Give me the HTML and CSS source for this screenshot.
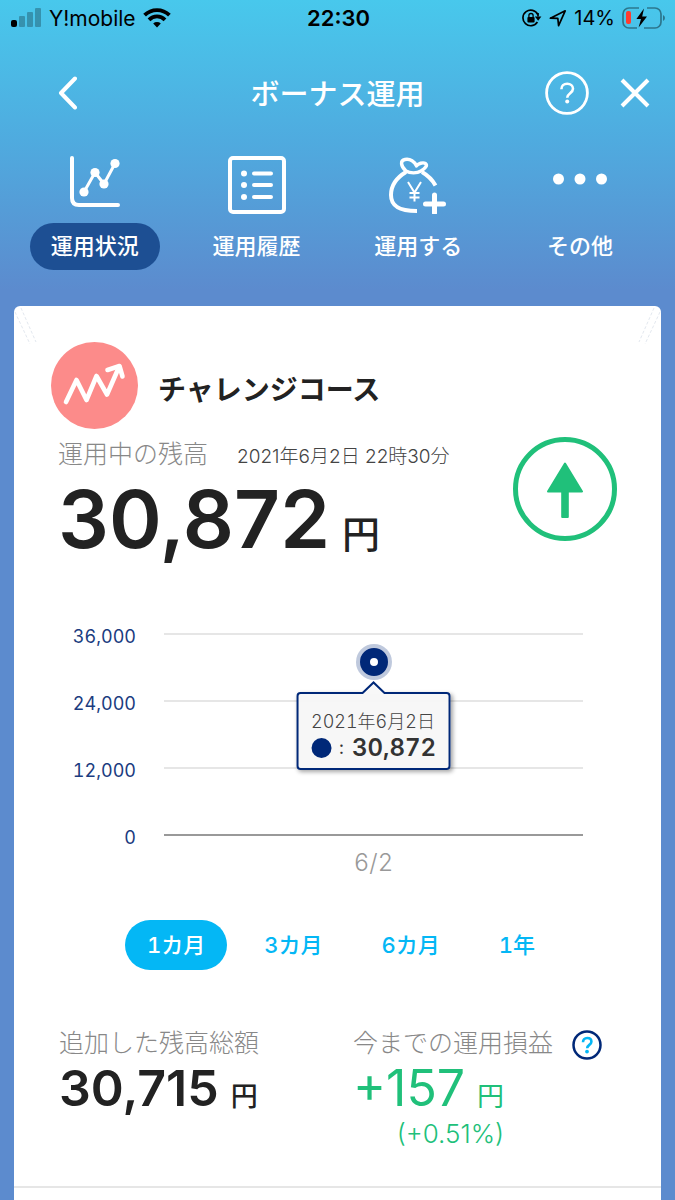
FILE: index.html
```html
<!DOCTYPE html>
<html lang="ja">
<head>
  <meta charset="UTF-8" />
  <meta name="viewport" content="width=device-width, initial-scale=1.0"/>
  <title>ボーナス運用</title>
  <link rel="stylesheet" href="styles.css">
</head>
<body>
  <div class="status-bar">
    <div class="status-left">
      <svg width="31" height="20" viewBox="0 0 31 20">
        <rect x="0" y="12" width="6" height="7" rx="2"/>
        <g opacity="0.25">
          <rect x="8" y="8" width="6" height="11" rx="1"/>
          <rect x="16" y="4" width="6" height="15" rx="1"/>
          <rect x="24" y="0" width="6" height="19" rx="1"/>
        </g>
      </svg>
      <span class="carrier">Y!mobile</span>
      <svg width="28" height="20" viewBox="0 0 28 20" fill="none" stroke="#000" stroke-width="3.8">
        <path d="M1.600 7.200a17.500 17.500 0 0 1 24.800 0"/>
        <path d="M6 11.800a11.200 11.200 0 0 1 16 0"/>
        <path d="M10.200 15.400a5.600 5.600 0 0 1 7.600 0L14 19.400Z" fill="#000" stroke="none"/>
      </svg>
    </div>
    <div class="status-time">22:30</div>
    <div class="status-right">
      <svg width="20" height="18" viewBox="0 0 20 18">
        <path d="M15.800 5.600A7.800 7.800 0 1 0 15.400 13" fill="none" stroke="#000" stroke-width="1.700"/>
        <path d="M16 4v3.600" stroke="#000" stroke-width="1.700"/>
        <path d="M12.800 7.400h6.600l-3.200 4.400z"/>
        <rect x="5.400" y="8" width="7.200" height="5.400" rx="1"/>
        <path d="M6.900 8.200V6.600a2.100 2.100 0 0 1 4.200 0v1.600" fill="none" stroke="#000" stroke-width="1.300"/>
      </svg>
      <svg width="18" height="18" viewBox="0 0 18 18" fill="none" stroke="#000" stroke-width="1.700" stroke-linejoin="round">
        <path d="M1.400 9.200 16.200 1.800 9.600 16.600 8.800 9.400Z"/>
      </svg>
      <span>14%</span>
      <svg width="44" height="22" viewBox="0 0 44 22">
        <path d="M17 1H7a6 6 0 0 0-6 6v8a6 6 0 0 0 6 6h8M25 1h8a6 6 0 0 1 6 6v8a6 6 0 0 1-6 6H22" fill="none" stroke="#000" stroke-opacity="0.4" stroke-width="1.700"/>
        <path d="M41 8v6q2-1 2-3t-2-3z" opacity="0.4"/>
        <rect x="4" y="4" width="5" height="13" rx="2" fill="#ff3b30"/>
        <path d="M22 1.500 14.400 12H19l-2.400 8.500L25 9.600h-4.800z"/>
      </svg>
    </div>
  </div>

  <header class="title-bar">
    <button class="icon-btn back" aria-label="戻る">
      <svg width="20" height="34" viewBox="0 0 20 34" fill="none" stroke="#fff" stroke-width="4" stroke-linecap="round" stroke-linejoin="round">
        <path d="M18 2.500 4 17 18 31.500"/>
      </svg>
    </button>
    <h1>ボーナス運用</h1>
    <div class="title-actions">
      <button class="icon-btn" aria-label="ヘルプ">
        <svg width="44" height="44" viewBox="0 0 44 44" fill="none" stroke="#fff" stroke-width="2.800">
          <circle cx="22" cy="22" r="20.400"/>
          <path d="M16.400 18.200c0-3.400 2.400-5.400 5.800-5.400s5.800 2 5.800 5c0 4.400-5.800 4.400-5.800 9" stroke-width="2.600"/>
          <circle cx="22.200" cy="30.600" r="2" fill="#fff" stroke="none"/>
        </svg>
      </button>
      <button class="icon-btn" aria-label="閉じる">
        <svg width="30" height="30" viewBox="0 0 30 30" fill="none" stroke="#fff" stroke-width="4">
          <path d="M2 2 28 28M28 2 2 28"/>
        </svg>
      </button>
    </div>
  </header>

  <nav class="tabs">
    <a href="#status" class="tab active">
      <svg width="60" height="60" viewBox="0 0 60 60" fill="none" stroke="#fff" stroke-width="4" stroke-linecap="round">
        <path d="M7 4v40q0 7 7 7h39"/>
        <path d="M19 38 30 18.500l9 11.500L50 9.500" stroke-width="3"/>
        <g fill="#fff" stroke="none">
          <circle cx="19" cy="38" r="4.600"/>
          <circle cx="30" cy="18.500" r="4.600"/>
          <circle cx="39" cy="30" r="4.600"/>
          <circle cx="50" cy="9.500" r="4.600"/>
        </g>
      </svg>
      <span>運用状況</span>
    </a>
    <a href="#history" class="tab">
      <svg width="60" height="60" viewBox="0 0 60 60" fill="none" stroke="#fff" stroke-width="4" stroke-linecap="round">
        <rect x="3" y="4" width="54" height="54" rx="3"/>
        <path d="M27 19.500h17M27 31h17M27 43h17"/>
        <g fill="#fff" stroke="none">
          <circle cx="17" cy="19.500" r="3"/>
          <circle cx="17" cy="31" r="3"/>
          <circle cx="17" cy="43" r="3"/>
        </g>
      </svg>
      <span>運用履歴</span>
    </a>
    <a href="#invest" class="tab">
      <svg width="60" height="60" viewBox="0 0 60 60" fill="none" stroke="#fff" stroke-width="4">
        <path d="M18 18C8 24 3 32.500 3 41c0 10.500 7 16 26 16M34 18c6 3.500 10.500 8 13.500 13.500"/>
        <path d="M18 17C12.500 12 12 6.500 17 5.500c5-1 10 2 11.500 6.500C30 9.500 35 8 37.500 9.500c2.500 2-.500 5-4.500 7.500-4 2.500-11 2.500-15 0Z" stroke-width="3.400" stroke-linejoin="round"/>
        <path d="M20 28l6.500 10.500L33 28M26.500 38.500v9M21.500 39h10M21.500 43.500h10" stroke-width="2"/>
        <path d="M46.500 41v18M37.500 50h18" stroke-width="5" stroke-linecap="round"/>
      </svg>
      <span>運用する</span>
    </a>
    <a href="#other" class="tab">
      <svg width="60" height="60" viewBox="0 0 60 60" fill="#fff">
        <circle cx="8.500" cy="25" r="5.500"/>
        <circle cx="30" cy="25" r="5.500"/>
        <circle cx="51.500" cy="25" r="5.500"/>
      </svg>
      <span>その他</span>
    </a>
  </nav>

  <main class="card">
    <svg class="corner left" width="24" height="40" viewBox="0 0 24 40"><path d="M1 6 16 38M7 2 22 36"/></svg>
    <svg class="corner right" width="24" height="40" viewBox="0 0 24 40"><path d="M23 6 8 38M17 2 2 36"/></svg>

    <div class="course">
      <svg width="87" height="87" viewBox="0 0 87 87" fill="none" stroke="#fff" stroke-width="4.600" stroke-linecap="round" stroke-linejoin="round">
        <circle cx="43.500" cy="43.500" r="43.500" fill="#fc8b8a" stroke="none"/>
        <path d="M15 60 25.500 38 35.500 58 45.500 34 56 52.500 68 25"/>
        <path d="M56.500 28 68.500 24 71.500 34.500"/>
      </svg>
      <h2>チャレンジコース</h2>
    </div>

    <section class="balance">
      <div>
        <div class="balance-head">
          <span class="label">運用中の残高</span>
          <time class="date">2021年6月2日 22時30分</time>
        </div>
        <div class="balance-amount">30,872<span class="yen">円</span></div>
      </div>
      <svg width="104" height="104" viewBox="0 0 104 104">
        <circle cx="52" cy="52" r="49.500" fill="none" stroke="#20c07a" stroke-width="5"/>
        <path d="M52 26.500 69 54.500H54.800V80h-5.600V54.500H35Z" fill="#20c07a" stroke="#20c07a" stroke-width="2" stroke-linejoin="round"/>
      </svg>
    </section>

    <section class="chart">
      <div class="y-axis">
        <span>36,000</span>
        <span>24,000</span>
        <span>12,000</span>
        <span>0</span>
      </div>
      <div class="plot">
        <div class="band"></div>
        <div class="band"></div>
        <div class="band"></div>
        <div class="point" style="left: 50%; bottom: 85.8%"></div>
        <div class="tooltip">
          <svg class="caret" width="26" height="13" viewBox="0 0 26 13">
            <path d="M1 13 13 1.500 25 13" fill="#f8f8f8" stroke="#002878" stroke-width="2"/>
          </svg>
          <div class="tooltip-date">2021年6月2日</div>
          <div class="tooltip-value"><i class="dot"></i><span>:</span><b>30,872</b></div>
        </div>
      </div>
      <div class="x-axis">6/2</div>
    </section>

    <div class="periods">
      <button class="period selected">1カ月</button>
      <button class="period">3カ月</button>
      <button class="period">6カ月</button>
      <button class="period">1年</button>
    </div>

    <section class="totals">
      <div class="total">
        <div class="label">追加した残高総額</div>
        <div class="amount">30,715<span class="yen">円</span></div>
      </div>
      <div class="total">
        <div class="label-row">
          <span class="label">今までの運用損益</span>
          <button class="icon-btn" aria-label="運用損益について">
            <svg width="30" height="30" viewBox="0 0 30 30" fill="none">
              <circle cx="15" cy="15" r="13.500" stroke="#002878" stroke-width="2.500"/>
              <path d="M11 12.200c0-2.600 1.600-4.200 4.200-4.200s4.200 1.500 4.200 3.700c0 3.300-4.200 3.100-4.200 6.500" stroke="#04b7f5" stroke-width="2.600"/>
              <circle cx="15" cy="21.600" r="1.900" fill="#04b7f5"/>
            </svg>
          </button>
        </div>
        <div class="gain">
          <div class="amount">+157<span class="yen">円</span></div>
          <div class="rate">(+0.51%)</div>
        </div>
      </div>
    </section>
  </main>
</body>
</html>
```
FILE: styles.css
```css
* {
  box-sizing: border-box;
}
body {
  margin: 0;
  min-height: 100vh;
  display: flex;
  flex-direction: column;
  background: #5c8bce linear-gradient(#48c8ec, #4fabdf 140px, #5c8bce 290px) no-repeat;
  font-family: Inter, "Noto Sans CJK JP", sans-serif;
  color: #222;
}
h1, h2 {
  margin: 0;
  line-height: 40px;
}
h1 {
  font-size: 29px;
  font-weight: 500;
}
h2 {
  font-size: 28px;
}
svg {
  display: block;
  flex: none;
}
button {
  font-family: inherit;
  background: none;
  border: none;
  padding: 0;
  cursor: pointer;
}

/* status bar */
.status-bar {
  display: grid;
  grid-template-columns: 1fr auto 1fr;
  align-items: center;
  height: 36px;
  padding: 0 9px 0 11px;
  color: #000;
  font-size: 20px;
}
.status-left, .status-right {
  display: flex;
  align-items: center;
}
.status-left {
  gap: 7px;
}
.carrier {
  font-size: 21px;
}
.status-right {
  justify-content: flex-end;
  gap: 7px;
}
.status-time {
  font-weight: 600;
  font-size: 22px;
}

/* title bar */
.title-bar {
  display: grid;
  grid-template-columns: 1fr auto 1fr;
  align-items: center;
  height: 114px;
  padding: 0 25px 0 57px;
  color: #fff;
}
.back {
  justify-self: start;
}
.title-bar h1 {
  margin-right: 32px;
  padding-top: 4px;
}
.title-actions {
  display: flex;
  align-items: center;
  justify-content: flex-end;
  gap: 31px;
}

/* tabs */
.tabs {
  display: grid;
  grid-template-columns: repeat(4, 1fr);
  padding: 4px 14px 0;
}
.tab {
  display: flex;
  flex-direction: column;
  align-items: center;
  gap: 9px;
  color: #fff;
  font-size: 22px;
  font-weight: 500;
  line-height: 47px;
  text-decoration: none;
}
.tab span {
  padding: 0 21px;
  border-radius: 24px;
}
.tab.active span {
  background: #1d4f93;
}

/* card */
.card {
  position: relative;
  flex: 1;
  margin: 36px 14px 0;
  padding-top: 36px;
  background: #fff;
  border-radius: 6px 6px 0 0;
}
.corner {
  position: absolute;
  top: 0;
  fill: none;
  stroke: #e3e8ef;
  stroke-dasharray: 3 2;
}
.corner.left {
  left: 0;
}
.corner.right {
  right: 0;
}
.course {
  display: flex;
  align-items: center;
  gap: 20px;
  padding-left: 37px;
}
.course h2 {
  padding-top: 8px;
}
.label {
  color: #888;
  font-size: 25px;
  font-weight: 300;
  line-height: 34px;
}
.balance {
  display: flex;
  justify-content: space-between;
  margin-top: 8px;
  padding: 0 44px;
}
.balance-head {
  display: flex;
  align-items: center;
  gap: 29px;
}
.date {
  color: #444;
  font-size: 19px;
  font-weight: 300;
}
.yen {
  line-height: 1;
}
.balance-amount {
  font-size: 80px;
  font-weight: 600;
  line-height: 96px;
}
.balance-amount .yen {
  margin-left: 12px;
  font-size: 38px;
  font-weight: 500;
}

/* chart */
.chart {
  display: grid;
  grid-template-columns: 122px 1fr;
  column-gap: 28px;
  margin-top: 66px;
  padding-right: 78px;
  font-variant-numeric: tabular-nums;
}
.y-axis {
  display: flex;
  flex-direction: column;
  justify-content: space-between;
  margin: -7px 0 -13px;
  color: #1b3c80;
  font-size: 18px;
  line-height: 22px;
  text-align: right;
}
.plot {
  position: relative;
  border-bottom: 2px solid #999;
}
.band {
  height: 67px;
  border-top: 2px solid #e6e6e6;
}
.point {
  position: absolute;
  width: 28px;
  height: 28px;
  margin: 0 0 -14px -14px;
  border: 10px solid #002878;
  border-radius: 50%;
  background: #fff;
  box-shadow: 0 0 0 4px #bfc9dd;
}
.tooltip {
  position: absolute;
  top: 59px;
  left: 50%;
  padding: 15px 13px 7px;
  transform: translateX(-50%);
  border: 2px solid #002878;
  border-radius: 4px;
  background: rgba(247, 247, 247, 0.94);
  box-shadow: 2px 2px 4px rgba(0, 0, 0, 0.35);
  color: #444;
  font-size: 18px;
  line-height: 26px;
  white-space: nowrap;
}
.caret {
  position: absolute;
  top: -13px;
  left: calc(50% - 13px);
}
.tooltip-date {
  font-weight: 300;
}
.tooltip-value {
  display: flex;
  align-items: center;
  gap: 8px;
  color: #333;
}
.tooltip-value b {
  font-size: 24px;
  font-weight: 600;
}
.dot {
  width: 20px;
  height: 20px;
  border-radius: 50%;
  background: #002878;
}
.x-axis {
  grid-column: 2;
  margin-top: 12px;
  color: #999;
  font-size: 24px;
  font-weight: 300;
  line-height: 30px;
  text-align: center;
}

/* period buttons */
.periods {
  display: flex;
  gap: 15px;
  margin-top: 42px;
  padding-left: 111px;
}
.period {
  padding: 0 22px;
  border-radius: 25px;
  color: #04b7f5;
  font-size: 22px;
  font-weight: 500;
  font-variant-numeric: tabular-nums;
  line-height: 50px;
}
.period.selected {
  background: #04b7f5;
  color: #fff;
}

/* totals */
.totals {
  display: grid;
  grid-template-columns: 1fr 1fr;
  gap: 12px;
  margin-top: 56px;
  padding: 0 26px 34px 45px;
  border-bottom: 2px solid #e6e6e6;
}
.label-row {
  display: flex;
  align-items: flex-end;
  gap: 19px;
}
.amount {
  font-size: 50px;
  font-weight: 600;
  line-height: 56px;
}
.amount .yen {
  margin-left: 12px;
  font-size: 27px;
  font-weight: 500;
}
.gain {
  width: fit-content;
  color: #20c07a;
  text-align: right;
}
.gain .amount, .gain .yen {
  font-weight: 400;
}
.rate {
  font-size: 26px;
  font-weight: 300;
  line-height: 36px;
}
```
